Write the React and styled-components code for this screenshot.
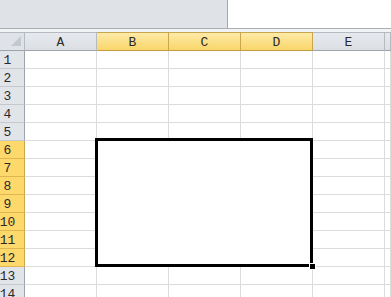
import React from 'react'
import styled, { createGlobalStyle } from 'styled-components'

const GlobalStyle = createGlobalStyle`
  html, body {
    margin: 0;
    padding: 0;
    background: #ffffff;
    overflow: hidden;
  }
`

const columns = ['A', 'B', 'C', 'D', 'E', '']
const selectedCols = ['B', 'C', 'D']
const rows = Array.from({ length: 14 }, (_, i) => i + 1)
const isRowSelected = (r) => r >= 6 && r <= 12

export default function App() {
  return (
    <Window>
      <GlobalStyle />
      <TopBar>
        <NameArea />
        <FormulaArea />
      </TopBar>
      <Gap />
      <Sheet>
        <Corner>
          <svg width="12" height="11" viewBox="0 0 12 11">
            <polygon points="11,0 11,10 1,10" fill="#c3c8ce" />
          </svg>
        </Corner>
        {columns.map((c, i) => (
          <ColHeader key={'h' + i} $selected={selectedCols.includes(c)}>
            {c}
          </ColHeader>
        ))}
        {rows.map((r) => (
          <React.Fragment key={r}>
            <RowHeader $selected={isRowSelected(r)}>{r}</RowHeader>
            {columns.map((c, i) => (
              <Cell key={r + '-' + i} />
            ))}
          </React.Fragment>
        ))}
        {/* merged B6:D12, drawn over the grid */}
        <Selection>
          <FillHandle />
        </Selection>
      </Sheet>
    </Window>
  )
}

const Window = styled.div`
  position: relative;
  width: 391px;
  height: 297px;
  overflow: hidden;
  background: #ffffff;
  font-family: "Liberation Mono", "DejaVu Sans Mono", monospace;
`

const TopBar = styled.div`
  display: flex;
  height: 28px;
  border-bottom: 1px solid #a9aeb4;
`

const NameArea = styled.div`
  width: 227px;
  background: #dfe3e8;
  border-right: 1px solid #a3a8ae;
`

const FormulaArea = styled.div`
  flex: 1;
  background: #ffffff;
`

const Gap = styled.div`
  height: 3px;
  background: #f1f3f5;
`

const Sheet = styled.div`
  position: relative;
  display: grid;
  grid-template-columns: 25px repeat(5, 72px) 1fr;
  grid-template-rows: 19px;
  grid-auto-rows: 18px;
`

const Corner = styled.div`
  box-sizing: border-box;
  display: flex;
  align-items: flex-end;
  justify-content: flex-end;
  padding: 0 2px 3px 0;
  background: #dfe3e8;
  border-top: 1px solid #b5bac0;
  border-right: 1px solid #b5bac0;
  border-bottom: 1px solid #9ea4aa;
`

const ColHeader = styled.div`
  box-sizing: border-box;
  display: flex;
  align-items: center;
  justify-content: center;
  padding-top: 1px;
  font-size: 13px;
  color: #2a2a2a;
  background: ${(p) =>
    p.$selected
      ? 'linear-gradient(#fdeaa6, #f9d66a)'
      : 'linear-gradient(#e6e9ed, #dbdfe4)'};
  border-top: 1px solid ${(p) => (p.$selected ? '#c9a54e' : '#b5bac0')};
  border-right: 1px solid ${(p) => (p.$selected ? '#c9a54e' : '#b5bac0')};
  border-bottom: 1px solid ${(p) => (p.$selected ? '#c29b3e' : '#9ea4aa')};
`

const RowHeader = styled.div`
  box-sizing: border-box;
  display: flex;
  align-items: center;
  justify-content: center;
  padding: 2px 9px 0 0;
  font-size: 13px;
  color: #2a2a2a;
  background: ${(p) => (p.$selected ? '#fdd86a' : '#e1e5e9')};
  border-right: 1px solid ${(p) => (p.$selected ? '#c9a54e' : '#9ea4aa')};
  border-bottom: 1px solid ${(p) => (p.$selected ? '#e2b553' : '#c4c9ce')};
`

const Cell = styled.div`
  box-sizing: border-box;
  border-right: 1px solid #dadcdd;
  border-bottom: 1px solid #dadcdd;
`

const Selection = styled.div`
  position: absolute;
  top: 106px;
  left: 95px;
  width: 218px;
  height: 129px;
  box-sizing: border-box;
  background: #ffffff;
  border: 3px solid #000000;
  pointer-events: none;
`

const FillHandle = styled.div`
  position: absolute;
  right: -6px;
  bottom: -6px;
  width: 5px;
  height: 5px;
  background: #000000;
  border: 1px solid #ffffff;
`
